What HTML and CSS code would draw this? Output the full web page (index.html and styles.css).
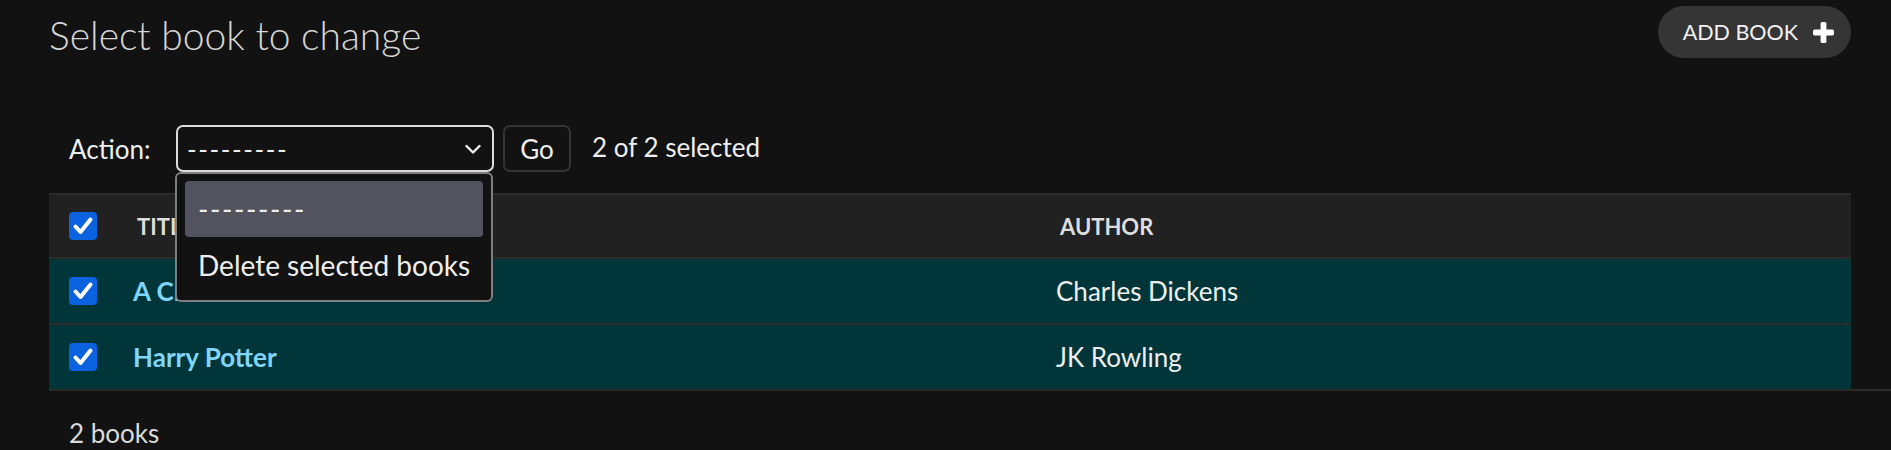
FILE: index.html
```html
<!DOCTYPE html>
<html lang="en">
<head>
    <meta charset="UTF-8">
    <meta name="viewport" content="width=device-width, initial-scale=1.0">
    <title>Select book to change</title>
    <link rel="stylesheet" href="styles.css">
</head>
<body>
    <div class="content">
        <div class="page-head">
            <h1>Select book to change</h1>
            <a class="addlink" href="#">ADD BOOK
                <svg class="plus" viewBox="0 0 21 21" width="21" height="21">
                    <rect x="7.6" y="0" width="5.8" height="21" rx="1.6" fill="#fff"/>
                    <rect x="0" y="7.6" width="21" height="5.8" rx="1.6" fill="#fff"/>
                </svg>
            </a>
        </div>

        <div class="actions">
            <label class="action-label">Action:</label>
            <div class="select-wrap">
                <div class="select">
                    <span class="dashes">---------</span>
                    <svg class="chevron" viewBox="0 0 16 11" width="16" height="11">
                        <polyline points="1.5,2 8,8.5 14.5,2" fill="none" stroke="#eee" stroke-width="2.4" stroke-linecap="round" stroke-linejoin="round"/>
                    </svg>
                </div>
                <ul class="select-list">
                    <li class="option active"><span class="dashes">---------</span></li>
                    <li class="option">Delete selected books</li>
                </ul>
            </div>
            <button class="go">Go</button>
            <span class="counter">2 of 2 selected</span>
        </div>

        <div class="result-list">
            <div class="row head">
                <div class="cell"><span class="check"><svg viewBox="0 0 28 28" width="28" height="28"><path d="M6.5 14.5 L11.5 20 L21.5 7.5" fill="none" stroke="#fff" stroke-width="4" stroke-linecap="round" stroke-linejoin="round"/></svg></span></div>
                <div class="cell th">TITLE</div>
                <div class="cell th">AUTHOR</div>
            </div>
            <div class="row selected">
                <div class="cell"><span class="check"><svg viewBox="0 0 28 28" width="28" height="28"><path d="M6.5 14.5 L11.5 20 L21.5 7.5" fill="none" stroke="#fff" stroke-width="4" stroke-linecap="round" stroke-linejoin="round"/></svg></span></div>
                <div class="cell td"><a href="#">A Christmas Carol</a></div>
                <div class="cell td">Charles Dickens</div>
            </div>
            <div class="row selected last">
                <div class="cell"><span class="check"><svg viewBox="0 0 28 28" width="28" height="28"><path d="M6.5 14.5 L11.5 20 L21.5 7.5" fill="none" stroke="#fff" stroke-width="4" stroke-linecap="round" stroke-linejoin="round"/></svg></span></div>
                <div class="cell td"><a href="#">Harry Potter</a></div>
                <div class="cell td">JK Rowling</div>
            </div>
        </div>

        <p class="paginator">2 books</p>
    </div>
</body>
</html>
```

FILE: styles.css
```css
body {
    margin: 0;
    padding: 0;
    background-color: #121212;
    color: #eeeeee;
    font-family: Lato, "Open Sans", sans-serif;
}
.content {
    padding-left: 49px;
}

.page-head {
    display: flex;
    justify-content: space-between;
    align-items: flex-start;
    margin-right: 40px;
    height: 58px;
}
.page-head h1 {
    margin: 11px 0 0 0;
    font-size: 39px;
    line-height: 48px;
    font-weight: 300;
    color: #d6d6d6;
}
.addlink {
    display: flex;
    align-items: center;
    gap: 15px;
    margin-top: 6px;
    height: 52px;
    padding: 0 17px 0 25px;
    border-radius: 26px;
    background-color: #353535;
    color: #f2f2f2;
    text-decoration: none;
    font-size: 21.5px;
    letter-spacing: 0;
}

.actions {
    display: flex;
    align-items: center;
    height: 47px;
    margin-top: 67px;
    margin-right: 40px;
    padding-left: 20px;
    font-size: 26px;
}
.action-label {
    width: 107px;
    flex: none;
}
.select-wrap {
    position: relative;
    width: 318px;
    height: 47px;
}
.select {
    box-sizing: border-box;
    display: flex;
    align-items: center;
    justify-content: space-between;
    height: 47px;
    padding: 0 11px 0 9px;
    border: 2px solid #dcdcdc;
    border-radius: 7px;
    background-color: #121212;
}
.dashes {
    letter-spacing: 1.6px;
}
.chevron {
    margin-top: 1px;
}
.select-list {
    position: absolute;
    left: -1px;
    top: 47px;
    box-sizing: border-box;
    width: 318px;
    margin: 0;
    padding: 7px 8px;
    list-style: none;
    border: 2px solid #7f7f7f;
    border-radius: 6px;
    background-color: #121212;
    z-index: 2;
}
.option {
    height: 56px;
    line-height: 56px;
    padding-left: 13px;
    font-size: 28px;
    border-radius: 4px;
    white-space: nowrap;
}
.option.active {
    background-color: #53535f;
}
.go {
    box-sizing: border-box;
    width: 68px;
    height: 47px;
    margin-left: 9px;
    padding: 0;
    border: 2px solid #343434;
    border-radius: 7px;
    background-color: #121212;
    color: #eeeeee;
    font-family: inherit;
    font-size: 26px;
}
.counter {
    margin-left: 21px;
    margin-bottom: 3px;
}

.result-list {
    margin-top: 21px;
    margin-right: 40px;
}
.row {
    display: grid;
    grid-template-columns: 72px 923px 1fr;
    align-items: center;
    height: 64px;
}
.row.head {
    height: 62px;
    background-color: #212121;
    border-top: 2px solid #2a2a2a;
    border-bottom: 2px solid #2b2b2b;
}
.row.selected {
    background-color: #00363a;
    border-bottom: 2px solid #2c2a2a;
}
.row.last {
    border-bottom: none;
}
.check {
    display: block;
    width: 28px;
    height: 28px;
    margin-left: 20px;
    border-radius: 4px;
    background-color: #0a62de;
}
.check svg {
    display: block;
}
.th {
    padding-left: 16px;
    font-size: 22px;
    font-weight: 700;
    color: #dedede;
}
.td {
    padding-left: 12px;
    font-size: 26px;
}
.td a {
    color: #81d4fa;
    font-weight: 700;
    text-decoration: none;
}

.paginator {
    margin: 0;
    padding: 27px 0 0 20px;
    border-top: 2px solid #2b2b2b;
    font-size: 26px;
    line-height: 1.2;
    color: #dadada;
}
```
